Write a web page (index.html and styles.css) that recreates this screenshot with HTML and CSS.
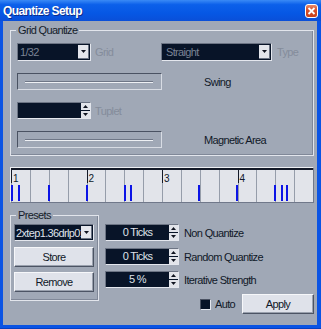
FILE: index.html
```html
<!DOCTYPE html>
<html>
<head>
<meta charset="utf-8">
<link rel="stylesheet" href="styles.css">
</head>
<body>
<div class="window">
  <div class="titlebar">
    <span class="title">Quantize Setup</span>
    <span class="close"><svg width="11" height="12" viewBox="0 0 11 12"><path d="M2.5 3 L8.5 9 M8.5 3 L2.5 9" stroke="#fff" stroke-width="1.8" fill="none"/></svg></span>
  </div>
  <div class="client">
    <div class="group grid-group">
      <span class="legend">Grid Quantize</span>
      <div class="row">
        <div class="combo grid-combo"><span class="val dis">1/32</span><span class="drop"><svg width="5" height="3" viewBox="0 0 5 3"><path d="M0 0H5L2.5 3Z" fill="#101420"/></svg></span></div>
        <span class="lbl dis lbl-grid">Grid</span>
        <div class="combo type-combo"><span class="val dis">Straight</span><span class="drop"><svg width="5" height="3" viewBox="0 0 5 3"><path d="M0 0H5L2.5 3Z" fill="#101420"/></svg></span></div>
        <span class="lbl dis lbl-type">Type</span>
      </div>
      <div class="row">
        <div class="slider"><span class="track"></span></div>
        <span class="lbl lbl-right">Swing</span>
      </div>
      <div class="row">
        <div class="spin tuplet"><span class="sval"></span><span class="sbtns"><span class="sb"><svg width="5" height="3" viewBox="0 0 5 3"><path d="M0 3H5L2.5 0Z" fill="#101420"/></svg></span><span class="sb"><svg width="5" height="3" viewBox="0 0 5 3"><path d="M0 0H5L2.5 3Z" fill="#101420"/></svg></span></span></div>
        <span class="lbl dis lbl-grid">Tuplet</span>
      </div>
      <div class="row">
        <div class="slider"><span class="track"></span></div>
        <span class="lbl lbl-right">Magnetic Area</span>
      </div>
    </div>

    <div class="ruler">
      <div class="cells">
        <div class="cell bar"><span class="num">1</span></div><div class="cell"></div><div class="cell"></div><div class="cell"></div>
        <div class="cell bar"><span class="num">2</span></div><div class="cell"></div><div class="cell"></div><div class="cell"></div>
        <div class="cell bar"><span class="num">3</span></div><div class="cell"></div><div class="cell"></div><div class="cell"></div>
        <div class="cell bar"><span class="num">4</span></div><div class="cell"></div><div class="cell"></div><div class="cell"></div>
      </div>
      <i class="note" style="left:0px"></i>
      <i class="note" style="left:7px"></i>
      <i class="note" style="left:37px"></i>
      <i class="note" style="left:75px"></i>
      <i class="note" style="left:113px"></i>
      <i class="note" style="left:119px"></i>
      <i class="note" style="left:187px"></i>
      <i class="note" style="left:225px"></i>
      <i class="note" style="left:263px"></i>
      <i class="note" style="left:270px"></i>
      <i class="note" style="left:275px"></i>
    </div>

    <div class="bottom">
      <div class="group presets">
        <span class="legend">Presets</span>
        <div class="combo preset-combo"><span class="val light">2xtep1.36drlp01</span><span class="drop"><svg width="5" height="3" viewBox="0 0 5 3"><path d="M0 0H5L2.5 3Z" fill="#101420"/></svg></span></div>
        <button class="btn store">Store</button>
        <button class="btn remove">Remove</button>
      </div>
      <div class="rightcol">
        <div class="spinrow r1">
          <div class="spin"><span class="sval">0 Ticks</span><span class="sbtns"><span class="sb"><svg width="5" height="3" viewBox="0 0 5 3"><path d="M0 3H5L2.5 0Z" fill="#101420"/></svg></span><span class="sb"><svg width="5" height="3" viewBox="0 0 5 3"><path d="M0 0H5L2.5 3Z" fill="#101420"/></svg></span></span></div>
          <span class="lbl slbl">Non Quantize</span>
        </div>
        <div class="spinrow r2">
          <div class="spin"><span class="sval">0 Ticks</span><span class="sbtns"><span class="sb"><svg width="5" height="3" viewBox="0 0 5 3"><path d="M0 3H5L2.5 0Z" fill="#101420"/></svg></span><span class="sb"><svg width="5" height="3" viewBox="0 0 5 3"><path d="M0 0H5L2.5 3Z" fill="#101420"/></svg></span></span></div>
          <span class="lbl slbl">Random Quantize</span>
        </div>
        <div class="spinrow r3">
          <div class="spin"><span class="sval">5 %</span><span class="sbtns"><span class="sb"><svg width="5" height="3" viewBox="0 0 5 3"><path d="M0 3H5L2.5 0Z" fill="#101420"/></svg></span><span class="sb"><svg width="5" height="3" viewBox="0 0 5 3"><path d="M0 0H5L2.5 3Z" fill="#101420"/></svg></span></span></div>
          <span class="lbl slbl">Iterative Strength</span>
        </div>
        <div class="actrow">
          <span class="check"></span>
          <span class="lbl auto">Auto</span>
          <button class="btn apply">Apply</button>
        </div>
      </div>
    </div>
  </div>
</div>
</body>
</html>
```
FILE: styles.css
```css
* { box-sizing: border-box; }
html, body { margin: 0; padding: 0; }
body {
  width: 321px;
  height: 329px;
  overflow: hidden;
  font-family: "Liberation Sans", Arial, sans-serif;
  font-size: 11px;
  letter-spacing: -0.65px;
  color: #101828;
}
.window {
  width: 321px;
  height: 329px;
  display: flex;
  flex-direction: column;
  background: #0b54e4;
  padding: 0 4px 3px 3px;
  border-bottom: 1px solid #0840c0;
}
.titlebar {
  height: 21px;
  margin: 0 -4px 0 -3px;
  padding: 0 3px 0 3px;
  display: flex;
  align-items: center;
  justify-content: space-between;
  background: linear-gradient(180deg, #3a8af6 0%, #0c60ea 22%, #0657e4 65%, #0a4fd8 100%);
}
.title {
  color: #fff;
  font-weight: bold;
  font-size: 12px;
  letter-spacing: -0.6px;
  text-shadow: 1px 1px 0 #0a2c8a;
  margin-top: 1px;
}
.close {
  width: 13px;
  height: 14px;
  border: 1px solid #fff;
  border-radius: 3px;
  background: linear-gradient(180deg, #e88a6a 0%, #d9512c 40%, #c8401c 100%);
  display: flex;
  align-items: center;
  justify-content: center;
  margin-top: 1px;
}
.client {
  flex: 1;
  background: #a0a8b6;
  padding: 9px 0 0 7px;
}
.group {
  position: relative;
  border: 1px solid #e2e5ec;
  box-shadow: inset -1px -1px 0 #808898;
}
.legend {
  position: absolute;
  top: -7px;
  left: 5px;
  padding: 0 2px;
  line-height: 12px;
  background: #a0a8b6;
  color: #141c2a;
}
.grid-group {
  width: 304px;
  padding: 12px 0 7px 6px;
  display: flex;
  flex-direction: column;
  gap: 12px;
}
.row {
  display: flex;
  align-items: center;
}
.lbl { white-space: nowrap; }
.dis { color: #848c9b; }
.combo {
  height: 18px;
  display: flex;
  align-items: center;
  background: #081428;
  border: 1px solid;
  border-color: #6c7484 #e4e7ee #e4e7ee #6c7484;
  padding-right: 1px;
}
.combo .val {
  flex: 1;
  padding-left: 2px;
  white-space: nowrap;
  overflow: hidden;
}
.combo .val.dis { color: #7a8394; }
.combo .val.light { color: #dfe2ea; padding-left: 1px; }
.drop {
  width: 11px;
  height: 14px;
  background: #e4e6ec;
  border-right: 1px solid #6a7282;
  border-bottom: 1px solid #6a7282;
  display: flex;
  align-items: center;
  justify-content: center;
}
.grid-combo { width: 74px; }
.type-combo { width: 111px; }
.type-combo .val { padding-left: 4px; }
.lbl-grid { width: 70px; padding-left: 4px; }
.lbl-type { margin-left: 5px; }
.slider {
  width: 145px;
  height: 17px;
  border: 1px solid;
  border-color: #4a5262 #d8dce4 #d8dce4 #4a5262;
  padding: 0 8px 0 7px;
  display: flex;
  align-items: center;
}
.track {
  flex: 1;
  height: 2px;
  border-top: 1px solid #6e7686;
  border-bottom: 1px solid #eef0f4;
}
.lbl-right { margin-left: 42px; }
.spin {
  width: 74px;
  height: 17px;
  display: flex;
  background: #081428;
  border: 1px solid;
  border-color: #6c7484 #e4e7ee #e4e7ee #6c7484;
}
.sval {
  flex: 1;
  color: #dfe2ea;
  text-align: center;
  line-height: 15px;
  white-space: nowrap;
}
.sbtns {
  width: 9px;
  display: flex;
  flex-direction: column;
  gap: 1px;
  background: #081428;
}
.sb {
  flex: 1;
  background: #e2e4ea;
  display: flex;
  align-items: center;
  justify-content: center;
}
.ruler {
  position: relative;
  width: 304px;
  height: 36px;
  margin-top: 11px;
  border: 1px solid;
  border-color: #eef0f4 #70788a #70788a #eef0f4;
  background: #e2e4ea;
}
.cells {
  display: flex;
  height: 100%;
  border-top: 2px solid #141a28;
}
.cell {
  flex: 1;
  position: relative;
  border-left: 1px solid #969daa;
}
.cell.bar::before {
  content: "";
  position: absolute;
  left: -1px;
  top: 0;
  width: 1px;
  height: 13px;
  background: #141a28;
}
.num {
  position: absolute;
  left: 1px;
  top: 4px;
  font-size: 10px;
  line-height: 10px;
  letter-spacing: 0;
  color: #101828;
}
.note {
  position: absolute;
  top: 17px;
  width: 2px;
  height: 16px;
  background: #0c14e6;
}
.bottom {
  display: flex;
  align-items: flex-start;
  margin-top: 12px;
  width: 304px;
}
.presets {
  width: 89px;
  height: 86px;
  padding: 8px 0 0 3px;
  display: flex;
  flex-direction: column;
}
.preset-combo { width: 80px; height: 17px; }
.preset-combo .drop { height: 13px; }
.btn {
  font-family: "Liberation Sans", Arial, sans-serif;
  font-size: 11px;
  letter-spacing: -0.65px;
  color: #101828;
  background: #dfe2ea;
  border: 1px solid;
  border-color: #f6f7fa #4c5464 #4c5464 #f6f7fa;
  box-shadow: inset -1px -1px 0 #9aa1ae;
  padding: 0;
  height: 20px;
}
.store, .remove { width: 80px; }
.store { margin-top: 6px; }
.remove { margin-top: 5px; }
.rightcol {
  flex: 1;
  margin-left: 6px;
  padding-top: 9px;
  display: flex;
  flex-direction: column;
}
.spinrow {
  display: flex;
  align-items: center;
  height: 17px;
}
.r1 { margin-bottom: 7px; }
.r2 { margin-bottom: 6px; }
.slbl { margin-left: 5px; }
.actrow {
  margin-top: 6px;
  display: flex;
  justify-content: flex-end;
  align-items: center;
  height: 20px;
}
.check {
  width: 11px;
  height: 11px;
  background: #081428;
  border: 1px solid;
  border-color: #4a5262 #e4e7ee #e4e7ee #4a5262;
}
.auto { width: 27px; margin-left: 4px; }
.apply { width: 72px; height: 20px; }
```
